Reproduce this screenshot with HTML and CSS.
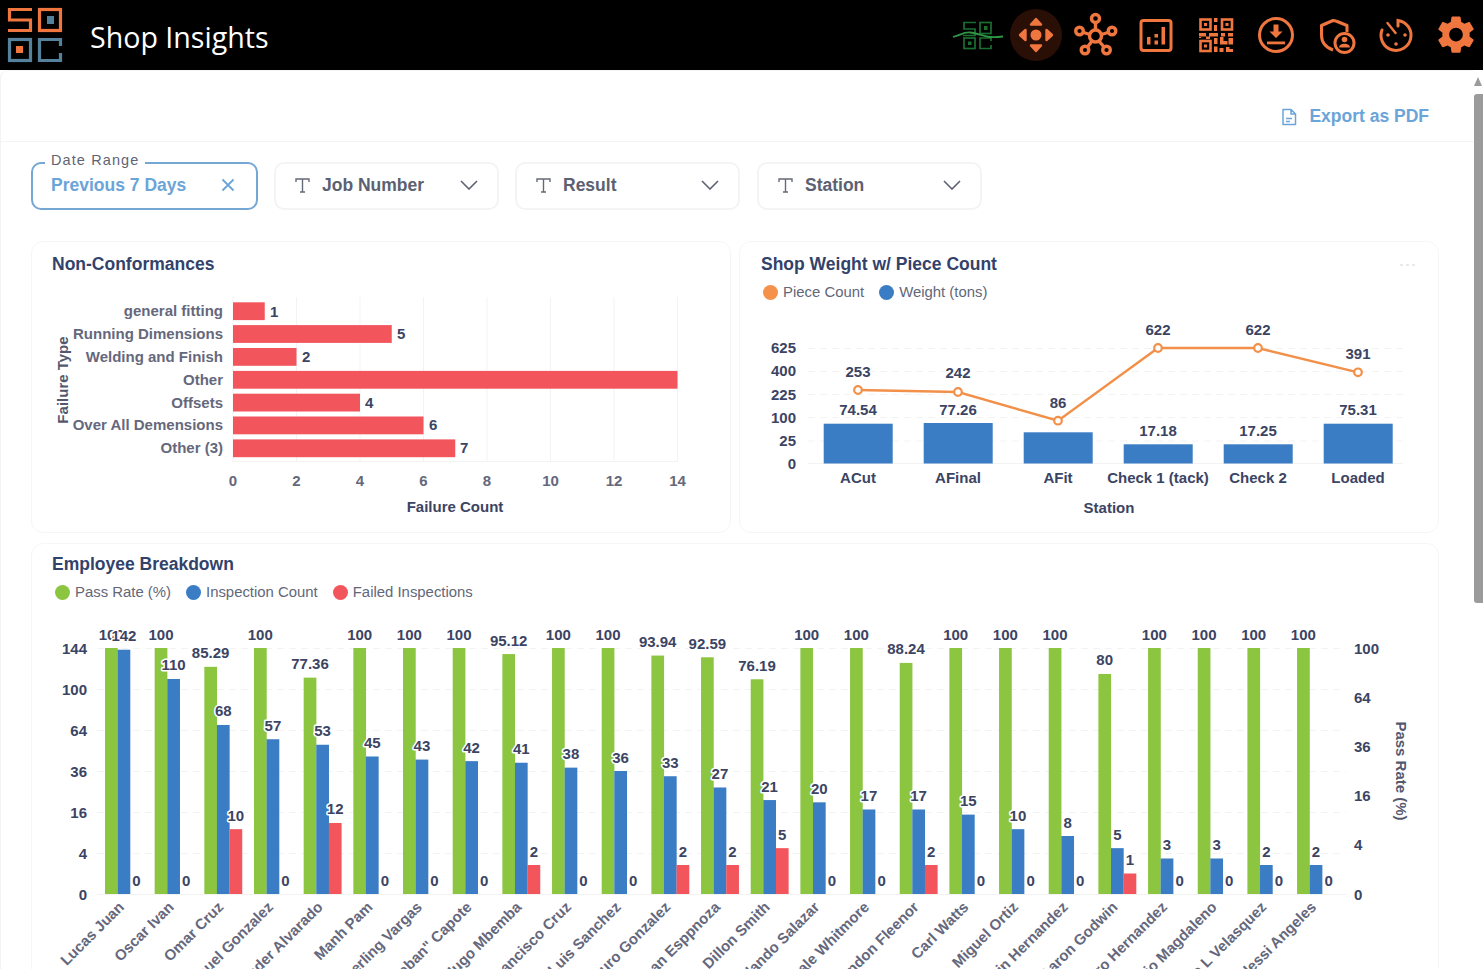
FILE: index.html
```html
<!DOCTYPE html>
<html lang="en">
<head>
<meta charset="utf-8">
<title>Shop Insights</title>
<link rel="stylesheet" href="styles.css">
</head>
<body>
<div class="app">
  <header class="topbar">
    <svg class="logo" viewBox="0 0 70 70" width="70" height="70">
      <g fill="none" stroke-width="3.200">
        <path class="s-orange" d="M32 9.500H9.500V20H30.500V30.500H8"/>
        <rect class="s-orange" x="39.500" y="9.500" width="21" height="21"/>
        <rect class="s-steel" x="9.500" y="39.500" width="21" height="21"/>
        <path class="s-steel" d="M60.500 46V39.500H39.500V60.500H60.500V53"/>
      </g>
      <rect class="f-steel" x="47" y="16" width="7" height="8"/>
      <rect class="f-orange" x="16" y="46" width="7" height="7"/>
    </svg>
    <h1 class="brand">Shop Insights</h1>
    <nav class="icons">
      <svg class="ico ico-green" viewBox="952 9 52 52" width="52" height="52">
        <g fill="none" class="s-dkgreen" stroke-width="1.700">
          <path d="M976 22.500H964V29H975V35.500H963"/>
          <rect x="980" y="22.500" width="11" height="11"/>
          <rect x="964" y="38" width="11" height="10.500"/>
          <path d="M991 41V38H980V48.500H991V45"/>
        </g>
        <rect class="f-dkgreen" x="984" y="26" width="3.500" height="4"/>
        <rect class="f-dkgreen" x="968" y="41.500" width="3.500" height="3.500"/>
        <path class="s-green" fill="none" stroke-width="1.800" d="M953 37C960 35 964 32 970 32.500C977 33 984 36.500 990 37C995 37.500 999 37 1003 36.500"/>
      </svg>
      <svg class="ico" viewBox="1010 9 52 52" width="52" height="52">
        <circle class="f-maroon" cx="1036" cy="35" r="26"/>
        <circle class="f-icon" cx="1036" cy="35" r="5.500"/>
        <g class="f-icon s-icon" stroke-width="2.400" stroke-linejoin="round">
          <path d="M1036 19L1041 24.500H1031Z"/>
          <path d="M1036 51L1041 45.500H1031Z"/>
          <path d="M1020 35L1025.500 30V40Z"/>
          <path d="M1052 35L1046.500 30V40Z"/>
        </g>
      </svg>
      <svg class="ico" viewBox="1070 9 52 52" width="52" height="52">
        <g fill="none" class="s-icon" stroke-width="3.400">
          <circle cx="1095.500" cy="36" r="6"/>
          <circle cx="1095.500" cy="18.500" r="4"/>
          <circle cx="1079.500" cy="31" r="3.800"/>
          <circle cx="1112" cy="31" r="3.800"/>
          <circle cx="1085" cy="50" r="3.800"/>
          <circle cx="1106.500" cy="50" r="3.800"/>
          <path d="M1095.500 22.500V30M1083.500 32.500L1090 34.500M1108 32.500L1101.500 34.500M1087.500 47L1092 41M1104 47L1099 41"/>
        </g>
      </svg>
      <svg class="ico" viewBox="1130 9 52 52" width="52" height="52">
        <rect class="s-icon" fill="none" stroke-width="3" x="1141" y="20.500" width="30" height="30" rx="2.500"/>
        <g class="f-icon">
          <rect x="1147" y="37" width="3.500" height="7.500"/>
          <rect x="1154.500" y="34" width="3.500" height="3.500"/>
          <rect x="1154.500" y="40.500" width="3.500" height="4"/>
          <rect x="1161.500" y="27" width="3.500" height="17.500"/>
        </g>
      </svg>
      <svg class="ico" viewBox="1190 9 52 52" width="52" height="52">
        <g fill="none" class="s-icon" stroke-width="2.600">
          <rect x="1200.500" y="19.500" width="10" height="10"/>
          <rect x="1222" y="19.500" width="10" height="10"/>
          <rect x="1200.500" y="41" width="10" height="10"/>
        </g>
        <path class="f-icon" d="M1204 23h3v3h-3zM1225.500 23h3v3h-3zM1204 44.500h3v3h-3zM1214 18h3.500v4h-3.500zM1214 25h3v6h-3zM1199 33h7v3.500h-7zM1201 38h-2v-1h2zM1209 33h9v3.500h-9zM1221 33h4v3.500h-4zM1228 33h5v3.500h-5zM1206 36.500h4v2.500h-4zM1214 38h3.500v6h-3.500zM1220 37h3.500v4h4v3.500h-7.500zM1228.500 38h4.500v6.500h-4.500zM1214 46.500h3.500v5.500h-3.500zM1219.500 48h4v4h-4zM1226 47h3.500v2h3.500v3h-7z"/>
      </svg>
      <svg class="ico" viewBox="1250 9 52 52" width="52" height="52">
        <circle class="s-icon" fill="none" stroke-width="3" cx="1276" cy="35" r="16.500"/>
        <path class="f-icon" d="M1273.500 24.500h5v7h4l-6.500 6.500l-6.500-6.500h4z"/>
        <rect class="f-icon" x="1267" y="41.500" width="18" height="2.800"/>
      </svg>
      <svg class="ico" viewBox="1310 9 52 52" width="52" height="52">
        <path class="s-icon" fill="none" stroke-width="3" stroke-linejoin="round" d="M1336 21L1347 25.500V32M1333 50C1326 47.500 1321.500 42 1321.500 35V25.500L1333 20.500L1336 21"/>
        <circle class="s-icon" fill="#000" stroke-width="3" cx="1344.500" cy="43" r="9.500"/>
        <circle class="f-icon" cx="1344.500" cy="39.500" r="2.800"/>
        <path class="f-icon" d="M1339 47.500C1339.500 44.500 1342 43.800 1344.500 43.800S1349.500 44.500 1350 47.500Z"/>
      </svg>
      <svg class="ico" viewBox="1370 9 52 52" width="52" height="52">
        <path class="s-icon" fill="none" stroke-width="3" stroke-linecap="round" d="M1398 26V20.500A15 15 0 1 1 1382 30"/>
        <path class="s-icon" fill="none" stroke-width="2.400" stroke-linecap="round" d="M1387.500 23L1395.500 33"/>
        <circle class="f-icon" cx="1388" cy="35" r="1.800"/>
        <circle class="f-icon" cx="1405" cy="35" r="1.800"/>
        <circle class="f-icon" cx="1396" cy="44" r="1.800"/>
      </svg>
      <svg class="ico" viewBox="-1.700 -1.500 27.400 27.400" width="52" height="52">
        <path class="f-icon" d="M19.140 12.940c.04-.3.06-.61.06-.94 0-.32-.02-.64-.07-.94l2.030-1.580c.18-.14.23-.41.12-.61l-1.920-3.320c-.12-.22-.37-.29-.59-.22l-2.390.96c-.5-.38-1.030-.7-1.620-.94l-.36-2.540c-.04-.24-.24-.41-.48-.41h-3.840c-.24 0-.43.17-.47.41l-.36 2.540c-.59.24-1.130.57-1.620.94l-2.390-.96c-.22-.08-.47 0-.59.22L2.740 8.870c-.12.21-.08.47.12.61l2.030 1.580c-.05.3-.09.63-.09.94s.02.64.07.94l-2.030 1.580c-.18.14-.23.41-.12.61l1.920 3.320c.12.22.37.29.59.22l2.390-.96c.5.38 1.030.7 1.620.94l.36 2.540c.05.24.24.41.48.41h3.840c.24 0 .44-.17.47-.41l.36-2.540c.59-.24 1.130-.56 1.620-.94l2.390.96c.22.08.47 0 .59-.22l1.920-3.320c.12-.22.07-.47-.12-.61l-2.010-1.580zM12 15.600c-1.980 0-3.600-1.620-3.600-3.600s1.620-3.600 3.600-3.600 3.600 1.620 3.600 3.600-1.620 3.600-3.600 3.600z"/>
      </svg>
    </nav>
  </header>

  <div class="workspace">
    <main class="content">
      <div class="toolbar">
        <a class="export">
          <svg viewBox="0 0 16 18" width="16" height="18">
            <path fill="none" stroke="currentColor" stroke-width="1.500" stroke-linejoin="round" d="M2 1.500H10L14.500 6V16.500H2ZM10 1.500V6H14.500M5 10.500H11M5 13.500H9"/>
          </svg>
          <span>Export as PDF</span>
        </a>
      </div>

      <section class="filters">
        <div class="filter filter-active">
          <span class="filter-legend">Date Range</span>
          <span class="filter-value">Previous 7 Days</span>
          <svg class="filter-clear" viewBox="0 0 14 14" width="14" height="14"><path d="M1.500 1.500L12.500 12.500M12.500 1.500L1.500 12.500"/></svg>
        </div>
        <div class="filter">
          <svg class="filter-t" viewBox="0 0 15 15" width="15" height="15"><path d="M1 4V1H14V4M7.500 1V14M5 14H10"/></svg>
          <span class="filter-name">Job Number</span>
          <svg class="filter-chev" viewBox="0 0 18 10" width="18" height="10"><path d="M1 1L9 9L17 1"/></svg>
        </div>
        <div class="filter">
          <svg class="filter-t" viewBox="0 0 15 15" width="15" height="15"><path d="M1 4V1H14V4M7.500 1V14M5 14H10"/></svg>
          <span class="filter-name">Result</span>
          <svg class="filter-chev" viewBox="0 0 18 10" width="18" height="10"><path d="M1 1L9 9L17 1"/></svg>
        </div>
        <div class="filter">
          <svg class="filter-t" viewBox="0 0 15 15" width="15" height="15"><path d="M1 4V1H14V4M7.500 1V14M5 14H10"/></svg>
          <span class="filter-name">Station</span>
          <svg class="filter-chev" viewBox="0 0 18 10" width="18" height="10"><path d="M1 1L9 9L17 1"/></svg>
        </div>
      </section>

      <section class="chart-row">
        <article class="card">
          <h2 class="card-title card-title-gap">Non-Conformances</h2>
          <svg class="chart" viewBox="32 285 698 247" width="698" height="247">
            <g class="grid-v">
              <path d="M233 297V462M296.500 297V462M360 297V462M423.500 297V462M487 297V462M550.500 297V462M614 297V462M677.500 297V462"/>
              <path d="M233 461.500H678"/>
            </g>
            <g class="bar-red">
              <rect x="233" y="302.300" width="31.750" height="17.800"/>
              <rect x="233" y="325.100" width="158.750" height="17.800"/>
              <rect x="233" y="348" width="63.500" height="17.800"/>
              <rect x="233" y="370.900" width="444.500" height="17.800"/>
              <rect x="233" y="393.700" width="127" height="17.800"/>
              <rect x="233" y="416.500" width="190.500" height="17.800"/>
              <rect x="233" y="439.400" width="222.250" height="17.800"/>
            </g>
            <g class="tick tick-gray end">
              <text x="223" y="316">general fitting</text>
              <text x="223" y="339">Running Dimensions</text>
              <text x="223" y="362">Welding and Finish</text>
              <text x="223" y="385">Other</text>
              <text x="223" y="408">Offsets</text>
              <text x="223" y="430">Over All Demensions</text>
              <text x="223" y="453">Other (3)</text>
            </g>
            <g class="tick val-dark">
              <text x="270" y="317">1</text>
              <text x="397" y="339">5</text>
              <text x="302" y="362">2</text>
              <text x="365" y="408">4</text>
              <text x="429" y="430">6</text>
              <text x="460" y="453">7</text>
            </g>
            <g class="tick tick-gray mid">
              <text x="233" y="486">0</text>
              <text x="296.500" y="486">2</text>
              <text x="360" y="486">4</text>
              <text x="423.500" y="486">6</text>
              <text x="487" y="486">8</text>
              <text x="550.500" y="486">10</text>
              <text x="614" y="486">12</text>
              <text x="677.500" y="486">14</text>
            </g>
            <text class="tick val-dark mid" x="455" y="512">Failure Count</text>
            <text class="tick axis-name mid" transform="translate(68 380) rotate(-90)">Failure Type</text>
          </svg>
        </article>

        <article class="card">
          <h2 class="card-title card-title-shift">Shop Weight w/ Piece Count</h2>
          <button class="card-more" aria-label="More"><i></i><i></i><i></i></button>
          <ul class="legend">
            <li><span class="dot dot-orange"></span>Piece Count</li>
            <li><span class="dot dot-blue"></span>Weight (tons)</li>
          </ul>
          <svg class="chart" viewBox="740 310 698 222" width="698" height="222">
            <path class="grid-h" d="M808 348.500H1403M808 371.500H1403M808 394.500H1403M808 417.500H1403M808 441H1403"/>
            <path class="grid-base" d="M808 463.500H1403"/>
            <g class="bar-blue">
              <rect x="823.700" y="423.700" width="69" height="39.800"/>
              <rect x="923.700" y="423" width="69" height="40.500"/>
              <rect x="1023.700" y="432.300" width="69" height="31.200"/>
              <rect x="1123.700" y="444.300" width="69" height="19.200"/>
              <rect x="1223.700" y="444.300" width="69" height="19.200"/>
              <rect x="1323.700" y="423.700" width="69" height="39.800"/>
            </g>
            <path class="line-orange" d="M858 390L958 392L1058 420.700L1158 348L1258 348L1358 372.300"/>
            <g class="pt-orange">
              <circle cx="858" cy="390" r="3.800"/>
              <circle cx="958" cy="392" r="3.800"/>
              <circle cx="1058" cy="420.700" r="3.800"/>
              <circle cx="1158" cy="348" r="3.800"/>
              <circle cx="1258" cy="348" r="3.800"/>
              <circle cx="1358" cy="372.300" r="3.800"/>
            </g>
            <g class="tick val-dark end">
              <text x="796" y="353">625</text>
              <text x="796" y="376">400</text>
              <text x="796" y="399.500">225</text>
              <text x="796" y="422.500">100</text>
              <text x="796" y="445.500">25</text>
              <text x="796" y="468.500">0</text>
            </g>
            <g class="tick val-dark mid">
              <text x="858" y="377">253</text>
              <text x="958" y="378">242</text>
              <text x="1058" y="408">86</text>
              <text x="1158" y="335">622</text>
              <text x="1258" y="335">622</text>
              <text x="1358" y="359">391</text>
              <text x="858" y="415">74.54</text>
              <text x="958" y="415">77.26</text>
              <text x="1158" y="436">17.18</text>
              <text x="1258" y="436">17.25</text>
              <text x="1358" y="415">75.31</text>
              <text x="858" y="483">ACut</text>
              <text x="958" y="483">AFinal</text>
              <text x="1058" y="483">AFit</text>
              <text x="1158" y="483">Check 1 (tack)</text>
              <text x="1258" y="483">Check 2</text>
              <text x="1358" y="483">Loaded</text>
              <text x="1109" y="513">Station</text>
            </g>
          </svg>
        </article>
      </section>

      <article class="card card-wide">
        <h2 class="card-title">Employee Breakdown</h2>
        <ul class="legend">
          <li><span class="dot dot-green"></span>Pass Rate (%)</li>
          <li><span class="dot dot-blue"></span>Inspection Count</li>
          <li><span class="dot dot-red"></span>Failed Inspections</li>
        </ul>
        <svg id="employee-chart" class="chart" viewBox="32 610 1406 400" width="1406" height="400"></svg>
      </article>
    </main>
    <aside class="scrollbar" aria-hidden="true">
      <span class="scroll-arrow"></span>
      <span class="scroll-thumb"></span>
    </aside>
  </div>
</div>
<script src="chart.js"></script>
</body>
</html>
```

FILE: styles.css
```css
* { box-sizing: border-box; }
html, body { margin: 0; height: 100%; overflow: hidden; background: #fff; }
body { font-family: "Liberation Sans", Arial, sans-serif; color: #2f3b59; }

.app { display: flex; flex-direction: column; height: 100vh; }

/* top bar */
.topbar { display: flex; align-items: center; height: 70px; flex: none; background: #000; }
.logo { flex: none; display: block; }
.brand { margin: 0 0 0 20px; padding-top: 3px; font: 400 28.600px/67px "Open Sans", sans-serif; color: #fff; white-space: nowrap; }
.icons { display: flex; gap: 8px; margin-left: auto; padding-right: 1px; align-items: center; }
.ico { display: block; flex: none; }
.ico-green { margin-right: -2px; }
.s-orange { stroke: #f0763f; }
.f-orange { fill: #f0763f; }
.s-steel { stroke: #55819c; }
.f-steel { fill: #55819c; }
.s-dkgreen { stroke: #1b6e31; }
.f-dkgreen { fill: #1b6e31; }
.s-green { stroke: #2f9645; }
.s-icon { stroke: #f0763f; }
.f-icon { fill: #f0763f; }
.f-maroon { fill: #2a0f07; }

/* page body */
.workspace { display: flex; flex: 1; min-height: 0; }
.content { flex: 1; min-width: 0; overflow: hidden; border-left: 1px solid #f3f3f3; border-top: 1px solid #f6f6f6; border-top-left-radius: 8px; }

.toolbar { display: flex; justify-content: flex-end; align-items: center; height: 71px; padding: 21px 45px 0 0; border-bottom: 1px solid #f4f4f4; }
.export { display: flex; align-items: center; gap: 12px; font-size: 17.500px; font-weight: 700; color: #6ba4d8; }

.filters { display: flex; gap: 16px; margin: 20px 0 0 30px; }
.filter { position: relative; display: flex; align-items: center; width: 225px; height: 48px; padding: 0 19px 2px; border: 2px solid #f4f4f4; border-radius: 10px; }
.filter:last-child { margin-left: 1px; }
.filter-active { width: 227px; padding-left: 20px; padding-right: 20px; border-color: #74a7d3; }
.filter-legend { position: absolute; left: 12px; top: -14px; padding: 0 6px; background: #fff; font-size: 14.500px; line-height: 20px; letter-spacing: 1.100px; color: #5f6474; }
.filter-value { font-size: 17.500px; font-weight: 700; color: #6ba4d8; margin-left: -2px; }
.filter-clear { margin-left: auto; margin-right: 1px; fill: none; stroke: #6ba4d8; stroke-width: 1.800; }
.filter-t { flex: none; fill: none; stroke: #666a76; stroke-width: 1.400; }
.filter-name { margin-left: 12px; font-size: 17.500px; font-weight: 700; color: #5c6172; }
.filter-chev { margin-left: auto; fill: none; stroke: #5c6172; stroke-width: 1.600; }

/* cards */
.chart-row { display: grid; grid-template-columns: 700px 700px; gap: 8px; margin: 31px 0 0 30px; }
.card { position: relative; border: 1px solid #f6f6f6; border-radius: 12px; background: #fff; }
.card-wide { width: 1408px; height: 600px; margin: 10px 0 0 30px; }
.card-title { margin: 0; padding: 12px 20px 0; font-size: 17.500px; line-height: 20px; font-weight: 700; color: #33426a; white-space: nowrap; }
.card-title-gap { padding-bottom: 11px; }
.card-title-shift { padding-left: 21px; }
.card-wide .card-title { padding-top: 10px; }
.card-more { position: absolute; top: 22px; right: 23px; display: flex; gap: 3px; padding: 0; border: 0; background: none; }
.card-more i { display: block; width: 3px; height: 2px; border-radius: 1px; background: #e4e6ea; }

.legend { display: flex; gap: 15px; margin: 8px 0 0; padding: 0 0 0 23px; list-style: none; height: 20px; }
.legend li { display: flex; align-items: center; gap: 5px; font-size: 14.900px; line-height: 20px; color: #62677a; white-space: nowrap; }
.dot { display: block; width: 15px; height: 15px; border-radius: 50%; }
.dot-orange { background: #f4914a; }
.dot-blue { background: #3a7dc4; }
.dot-green { background: #8cc540; }
.dot-red { background: #f2555c; }

.chart { display: block; }
.legend + .chart { margin-top: 8px; }

/* svg chart parts */
.tick { font-size: 15px; font-weight: 700; }
.tick-gray { fill: #65687c; }
.names { white-space: pre; }
.val-dark { fill: #3c4463; }
.axis-name { fill: #54586e; }
.end { text-anchor: end; }
.mid { text-anchor: middle; }
.halo { paint-order: stroke; stroke: #fff; stroke-width: 3px; stroke-linejoin: round; }
.grid-v { fill: none; stroke: #f3f3f3; stroke-width: 1; }
.grid-h { fill: none; stroke: #f3f3f3; stroke-width: 1; stroke-dasharray: 7 5; }
.grid-base { fill: none; stroke: #f2f2f2; stroke-width: 1; }
.bar-red { fill: #f2555c; }
.bar-blue { fill: #3a7dc4; }
.bar-green { fill: #8cc540; }
.line-orange { fill: none; stroke: #f28f48; stroke-width: 2.400; }
.pt-orange { fill: #fff; stroke: #f28f48; stroke-width: 2.200; }

/* scrollbar */
.scrollbar { flex: none; width: 9px; display: flex; flex-direction: column; padding-top: 7px; background: #fff; }
.scroll-arrow { display: block; width: 0; height: 0; border-left: 4.500px solid transparent; border-right: 4.500px solid transparent; border-bottom: 9px solid #9b9b9b; }
.scroll-thumb { display: block; margin-top: 8px; height: 509px; background: #9b9b9b; border-radius: 3px 0 0 3px; }
```

FILE: chart.js
```js
(function () {
  var NS = 'http://www.w3.org/2000/svg';
  var svg = document.getElementById('employee-chart');
  var names = ['Lucas Juan', 'Oscar Ivan', 'Omar Cruz', 'Manuel Gonzalez', 'Alexander Alvarado', 'Manh Pam', 'Sterling  Vargas', '"Esteban" Capote', 'Hugo Mbemba', 'Francisco Cruz', 'Luis Sanchez', 'Arturo Gonzalez', 'Juan Esppnoza', 'Dillon Smith', 'Orlando Salazar', 'Dale Whitmore', 'Brandon Fleenor', 'Carl Watts', 'Miguel Ortiz', 'Martin Hernandez', 'Aaron Godwin', 'Pedro Hernandez', 'Mario Magdaleno', 'Jose L Velasquez', 'Alessi Angeles'];
  var pass = [100, 100, 85.29, 100, 77.36, 100, 100, 100, 95.12, 100, 100, 93.94, 92.59, 76.19, 100, 100, 88.24, 100, 100, 100, 80, 100, 100, 100, 100];
  var count = [142, 110, 68, 57, 53, 45, 43, 42, 41, 38, 36, 33, 27, 21, 20, 17, 17, 15, 10, 8, 5, 3, 3, 2, 2];
  var failed = [0, 0, 10, 0, 12, 0, 0, 0, 2, 0, 0, 2, 2, 5, 0, 0, 2, 0, 0, 0, 1, 0, 0, 0, 0];

  var TOP = 648, BASE = 894, H = BASE - TOP, LEFT = 105, STEP = 49.67, BAR = 12.6;

  function el(tag, attrs, text, parent) {
    var n = document.createElementNS(NS, tag);
    for (var k in attrs) n.setAttribute(k, attrs[k]);
    if (text !== undefined && text !== null) n.textContent = text;
    (parent || svg).appendChild(n);
    return n;
  }
  function yFor(value, max) { return BASE - Math.sqrt(value / max) * H; }

  var grid = '';
  [0, 1, 2, 3, 4, 5].forEach(function (i) {
    var y = TOP + 0.5 + i * (H / 6);
    grid += 'M97 ' + y + 'H1346';
  });
  el('path', { 'class': 'grid-h', d: grid });
  el('path', { 'class': 'grid-base', d: 'M97 ' + (BASE + 0.5) + 'H1346' });

  var bars = el('g', {});
  var labels = el('g', { 'class': 'tick val-dark mid' });
  var bottom = el('g', { 'class': 'tick tick-gray end names' });

  function series(values, max, offset, cls) {
    values.forEach(function (v, i) {
      var x = LEFT + i * STEP + offset * BAR;
      var y = yFor(v, max);
      if (v > 0) el('rect', { 'class': cls, x: x, y: y, width: BAR + 0.1, height: BASE - y }, null, bars);
      el('text', { 'class': 'halo', x: x + BAR / 2, y: y - 8.5 }, String(v), labels);
    });
  }
  series(pass, 100, 0, 'bar-green');
  series(count, 144, 1, 'bar-blue');
  series(failed, 144, 2, 'bar-red');

  names.forEach(function (name, i) {
    var x = LEFT + i * STEP + 20;
    el('text', { transform: 'translate(' + x + ' 908) rotate(-45)' }, name, bottom);
  });

  var left = el('g', { 'class': 'tick val-dark end' });
  [144, 100, 64, 36, 16, 4, 0].forEach(function (t, i) {
    el('text', { x: 87, y: 653.500 + i * 41 }, String(t), left);
  });
  var right = el('g', { 'class': 'tick val-dark' });
  [100, 64, 36, 16, 4, 0].forEach(function (t, i) {
    el('text', { x: 1354, y: 653.500 + i * 49.2 }, String(t), right);
  });
  el('text', { 'class': 'tick axis-name mid', transform: 'translate(1396 771) rotate(90)' }, 'Pass Rate (%)');
})();
```
